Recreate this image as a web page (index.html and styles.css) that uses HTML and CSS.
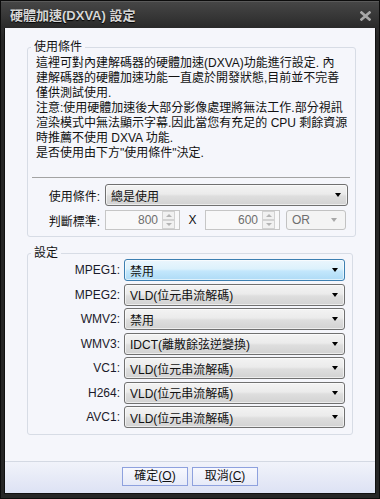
FILE: index.html
```html
<!DOCTYPE html>
<html lang="zh-Hant">
<head>
    <meta charset="UTF-8">
    <title>硬體加速(DXVA) 設定</title>
    <link rel="stylesheet" href="styles.css">
</head>
<body>
    <div class="window">
        <div class="titlebar">
            <span class="title">硬體加速(DXVA) 設定</span>
            <svg class="close" width="11" height="10" viewBox="0 0 11 10">
                <path d="M1.5 1.5 L9.5 8.5 M9.5 1.5 L1.5 8.5" stroke="#a8a8a8" stroke-width="2.6" stroke-linecap="square"/>
            </svg>
        </div>
        <div class="client">
            <div class="body">
                <fieldset class="group">
                    <legend>使用條件</legend>
                    <p class="note">這裡可對內建解碼器的硬體加速(DXVA)功能進行設定. 內<br>建解碼器的硬體加速功能一直處於開發狀態,目前並不完善<br>僅供測試使用.<br>注意:使用硬體加速後大部分影像處理將無法工作.部分視訊<br>渲染模式中無法顯示字幕.因此當您有充足的 CPU 剩餘資源<br>時推薦不使用 DXVA 功能.<br>是否使用由下方"使用條件"決定.</p>
                    <div class="sep"></div>
                    <div class="cond-row">
                        <span class="label">使用條件:</span>
                        <div class="combo wide"><span>總是使用</span><i class="arrow"></i></div>
                    </div>
                    <div class="cond-row second">
                        <span class="label">判斷標準:</span>
                        <div class="spin"><span class="val">800</span><div class="spin-btns"><b class="up"></b><b class="down"></b></div></div>
                        <span class="times">X</span>
                        <div class="spin"><span class="val">600</span><div class="spin-btns"><b class="up"></b><b class="down"></b></div></div>
                        <div class="combo disabled small"><span>OR</span><i class="arrow"></i></div>
                    </div>
                </fieldset>

                <fieldset class="group codecs">
                    <legend>設定</legend>
                    <div class="codec-row">
                        <span class="label">MPEG1:</span>
                        <div class="combo hot"><span>禁用</span><i class="arrow"></i></div>
                    </div>
                    <div class="codec-row">
                        <span class="label">MPEG2:</span>
                        <div class="combo"><span>VLD(位元串流解碼)</span><i class="arrow"></i></div>
                    </div>
                    <div class="codec-row">
                        <span class="label">WMV2:</span>
                        <div class="combo"><span>禁用</span><i class="arrow"></i></div>
                    </div>
                    <div class="codec-row">
                        <span class="label">WMV3:</span>
                        <div class="combo"><span>IDCT(離散餘弦逆變換)</span><i class="arrow"></i></div>
                    </div>
                    <div class="codec-row">
                        <span class="label">VC1:</span>
                        <div class="combo"><span>VLD(位元串流解碼)</span><i class="arrow"></i></div>
                    </div>
                    <div class="codec-row">
                        <span class="label">H264:</span>
                        <div class="combo"><span>VLD(位元串流解碼)</span><i class="arrow"></i></div>
                    </div>
                    <div class="codec-row">
                        <span class="label">AVC1:</span>
                        <div class="combo"><span>VLD(位元串流解碼)</span><i class="arrow"></i></div>
                    </div>
                </fieldset>
            </div>
            <div class="footer">
                <button class="btn">確定(<u>O</u>)</button>
                <button class="btn">取消(<u>C</u>)</button>
            </div>
        </div>
    </div>
</body>
</html>
```

FILE: styles.css
```css
html, body {
    margin: 0;
    padding: 0;
    background: #1c1c1c;
}
body {
    font-family: "Liberation Sans", "Noto Sans CJK TC", sans-serif;
    font-size: 12px;
    color: #111;
}
.window {
    width: 380px;
    height: 499px;
    box-sizing: border-box;
    display: flex;
    flex-direction: column;
    background: linear-gradient(#3e3e3e, #262626 40px, #262626);
    border: 1px solid #0c0c0c;
}
.titlebar {
    height: 27px;
    display: flex;
    align-items: center;
    justify-content: space-between;
    padding: 0 8px 0 9px;
    background: linear-gradient(#464646, #2a2a2a);
    border-top: 1px solid #5a5a5a;
    box-sizing: border-box;
}
.title {
    color: #d6d6d6;
    font-size: 13px;
    font-weight: bold;
    text-shadow: 0 1px 1px #000;
    line-height: 1;
}
.close {
    display: block;
    margin-top: 1px;
}
.client {
    flex: 1;
    margin: 0 3px 4px 3px;
    background: #f5f6fb;
    display: flex;
    flex-direction: column;
    border: 1px solid #111;
    border-top: none;
}
.body {
    padding: 13px 22px 0 22px;
}
.group {
    margin: 0;
    padding: 0 0 6px 0;
    border: 1px solid #d7dce5;
    border-radius: 3px;
}
.group legend {
    margin-left: 3px;
    padding: 0 3px;
    line-height: 12px;
    color: #111;
}
.note {
    margin: 0;
    padding: 3px 8px 0 8px;
    line-height: 15px;
    white-space: nowrap;
    color: #111;
}
.sep {
    height: 1px;
    background: #a3a3a3;
    margin: 16px 5px 0 4px;
}
.cond-row {
    display: flex;
    align-items: center;
    margin-top: 6px;
    padding-right: 7px;
}
.cond-row.second {
    margin-top: 4px;
}
.cond-row .label {
    width: 72px;
    margin-right: 5px;
    text-align: right;
}
.codec-row {
    display: flex;
    align-items: center;
    margin-bottom: 2.5px;
    padding-right: 7px;
}
.codec-row:last-child {
    margin-bottom: 0;
}
.codec-row .label {
    width: 92px;
    margin-right: 4px;
    text-align: right;
    color: #1a1a2a;
}
.codecs {
    margin-top: 10px;
}
.combo {
    flex: 1;
    height: 22px;
    box-sizing: border-box;
    display: flex;
    align-items: center;
    justify-content: space-between;
    padding: 0 6px 0 5px;
    border: 1px solid #707070;
    border-radius: 3px;
    background: linear-gradient(#f3f3f3, #ebebeb 45%, #dedede 55%, #d2d2d2);
    box-shadow: inset 0 0 0 1px rgba(255,255,255,0.6);
}
.combo.hot {
    border-color: #3c7fb1;
    background: linear-gradient(#ebf6fd, #dcf1fc 45%, #c3e7fc 55%, #aedbf6);
}
.combo.small {
    flex: none;
    width: 60px;
    height: 20px;
    margin-left: 6px;
}
.combo.disabled {
    border-color: #c2c2c2;
    background: #f4f4f4;
    box-shadow: none;
    color: #6e6e6e;
}
.arrow {
    width: 0;
    height: 0;
    border-left: 3.5px solid transparent;
    border-right: 3.5px solid transparent;
    border-top: 4px solid #000;
}
.combo.disabled .arrow {
    border-top-color: #a8a8a8;
    margin-right: 2px;
}
.spin {
    width: 75px;
    height: 20px;
    box-sizing: border-box;
    display: flex;
    align-items: center;
    justify-content: flex-end;
    border: 1px solid #c6c6c6;
    background: #f8f8f9;
    padding-right: 4px;
}
.spin .val {
    color: #6d6d6d;
    margin-right: 4px;
}
.spin-btns {
    display: flex;
    flex-direction: column;
    width: 13px;
}
.spin-btns b {
    height: 9px;
    box-sizing: border-box;
    border: 1px solid #d2d2d2;
    background: #f1f1f1;
    display: flex;
    align-items: center;
    justify-content: center;
}
.spin-btns b::after {
    content: "";
    width: 0;
    height: 0;
    border-left: 3px solid transparent;
    border-right: 3px solid transparent;
}
.spin-btns .up::after {
    border-bottom: 3px solid #b4b4b4;
}
.spin-btns .down::after {
    border-top: 3px solid #b4b4b4;
}
.times {
    width: 25px;
    text-align: center;
    color: #111;
}
.footer {
    margin-top: auto;
    height: 32px;
    box-sizing: border-box;
    border-top: 1px solid #d4d9e3;
    background: linear-gradient(#f1f3fa, #dde2f4);
    display: flex;
    justify-content: center;
    align-items: flex-start;
    padding-top: 5px;
    gap: 4px;
}
.btn {
    width: 66px;
    height: 19px;
    padding: 0;
    font-family: inherit;
    font-size: 12px;
    line-height: 17px;
    color: #111;
    border: 1px solid #8ea1de;
    background: linear-gradient(#f7f8fe, #e6eaf8);
}
.btn u {
    text-underline-offset: 1px;
}
```
